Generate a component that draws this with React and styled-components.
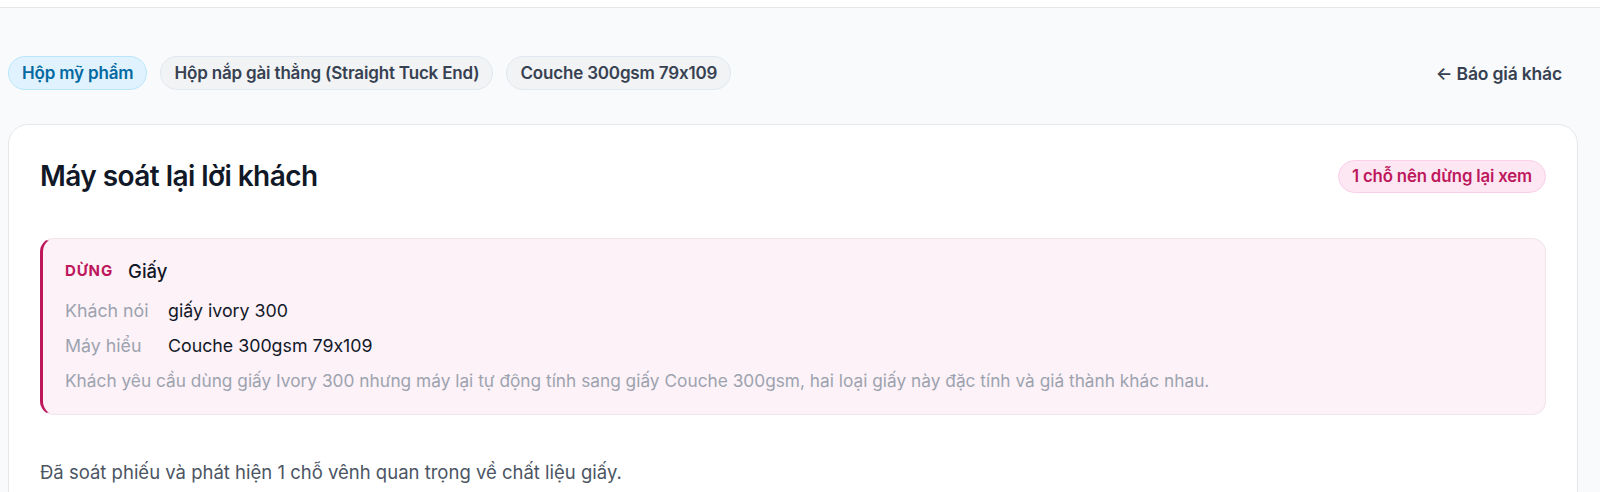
import React from 'react';
import styled, { createGlobalStyle } from 'styled-components';

const GlobalStyle = createGlobalStyle`
  body {
    margin: 0;
    background: #f8fafc;
    font-family: Inter, "Noto Sans", sans-serif;
    font-feature-settings: "calt" 0;
    color: #111827;
  }
`;

const TopBar = styled.div`
  height: 7px;
  background: #ffffff;
  border-bottom: 1px solid #e5e7eb;
`;

const Main = styled.main`
  padding: 48px 22px 0 8px;
`;

const ChipRow = styled.div`
  display: flex;
  align-items: center;
  justify-content: space-between;
  margin-bottom: 34px;
`;

const Chips = styled.div`
  display: flex;
  gap: 13px;
`;

const Chip = styled.span`
  display: inline-flex;
  align-items: center;
  height: 34px;
  box-sizing: border-box;
  padding: 0 13px;
  border-radius: 999px;
  font-size: 17px;
  font-weight: 600;
  letter-spacing: -0.01em;
  border: 1px solid ${(p) => (p.$accent ? '#bae6fd' : '#e2e8f0')};
  background: ${(p) => (p.$accent ? '#e0f2fe' : '#f1f3f5')};
  color: ${(p) => (p.$accent ? '#0369a1' : '#374151')};
`;

const BackLink = styled.a`
  padding: 6px 16px;
  font-size: 17.5px;
  font-weight: 600;
  color: #374151;
  text-decoration: none;
  letter-spacing: -0.01em;
`;

const Card = styled.section`
  background: #ffffff;
  border: 1px solid #e5e7eb;
  border-radius: 20px;
  padding: 34px 31px 40px 31px;
  display: flex;
  flex-direction: column;
  gap: 45px;
`;

const CardHeader = styled.div`
  display: flex;
  align-items: center;
  justify-content: space-between;
`;

const Title = styled.h2`
  margin: 0;
  font-size: 28px;
  font-weight: 600;
  letter-spacing: -0.02em;
  color: #111827;
`;

const CountBadge = styled.span`
  display: inline-flex;
  align-items: center;
  height: 33px;
  box-sizing: border-box;
  padding: 0 13px;
  border-radius: 999px;
  background: #fce7f3;
  border: 1px solid #fbcfe8;
  color: #be185d;
  font-size: 16.8px;
  font-weight: 600;
  letter-spacing: -0.01em;
`;

const Alert = styled.div`
  background: #fdf2f8;
  border: 1px solid #f3e3eb;
  border-left: 3px solid #be185d;
  border-radius: 14px;
  padding: 20px 22px 22px;
`;

const AlertHead = styled.div`
  display: flex;
  align-items: center;
  gap: 15px;
  line-height: 24px;
`;

const Level = styled.span`
  font-size: 15px;
  font-weight: 700;
  letter-spacing: 0.06em;
  color: #be185d;
`;

const Field = styled.span`
  font-size: 18.5px;
  font-weight: 500;
  color: #111827;
`;

const Rows = styled.dl`
  display: grid;
  grid-template-columns: 103px 1fr;
  row-gap: 11px;
  margin: 16px 0 0;
  line-height: 24px;
  font-size: 17.8px;
`;

const Label = styled.dt`
  color: #9ca3af;
`;

const Value = styled.dd`
  margin: 0;
  color: #111827;
`;

const Note = styled.p`
  margin: 12px 0 0;
  font-size: 17.3px;
  line-height: 22px;
  color: #9ca3af;
`;

const Summary = styled.p`
  margin: 0;
  font-size: 18.5px;
  line-height: 24px;
  color: #4b5563;
`;

export default function App() {
  return (
    <>
      <GlobalStyle />
      <TopBar />
      <Main>
        <ChipRow>
          <Chips>
            <Chip $accent>Hộp mỹ phẩm</Chip>
            <Chip>Hộp nắp gài thẳng (Straight Tuck End)</Chip>
            <Chip>Couche 300gsm 79x109</Chip>
          </Chips>
          <BackLink href="#">← Báo giá khác</BackLink>
        </ChipRow>
        <Card>
          <CardHeader>
            <Title>Máy soát lại lời khách</Title>
            <CountBadge>1 chỗ nên dừng lại xem</CountBadge>
          </CardHeader>
          <Alert>
            <AlertHead>
              <Level>DỪNG</Level>
              <Field>Giấy</Field>
            </AlertHead>
            <Rows>
              <Label>Khách nói</Label>
              <Value>giấy ivory 300</Value>
              <Label>Máy hiểu</Label>
              <Value>Couche 300gsm 79x109</Value>
            </Rows>
            <Note>
              Khách yêu cầu dùng giấy Ivory 300 nhưng máy lại tự động tính sang giấy Couche
              300gsm, hai loại giấy này đặc tính và giá thành khác nhau.
            </Note>
          </Alert>
          <Summary>Đã soát phiếu và phát hiện 1 chỗ vênh quan trọng về chất liệu giấy.</Summary>
        </Card>
      </Main>
    </>
  );
}
